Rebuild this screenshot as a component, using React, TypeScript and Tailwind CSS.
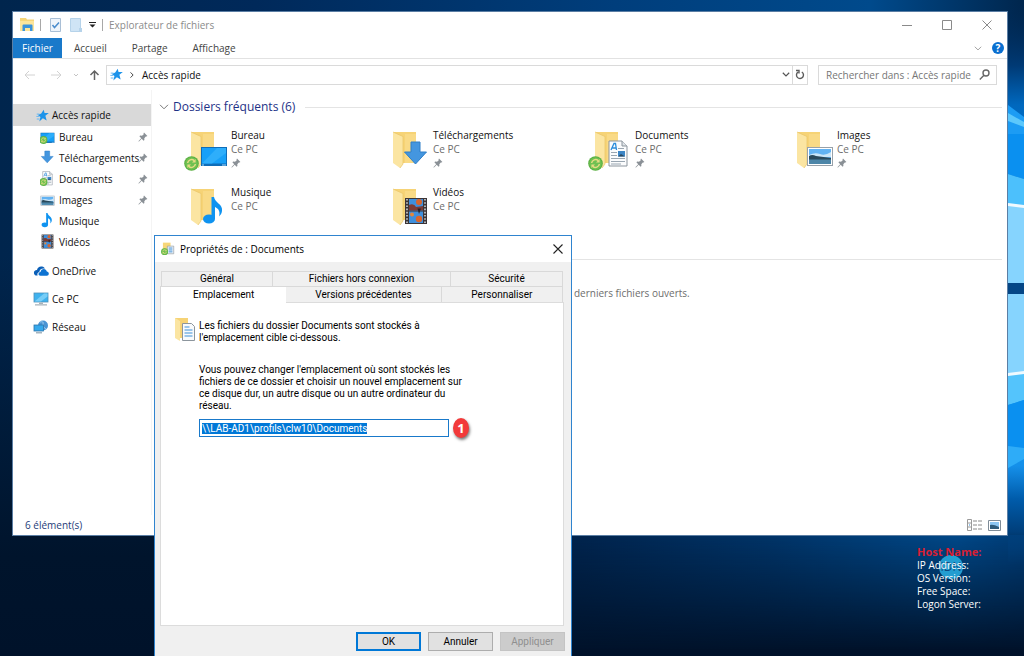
import { useEffect, useRef, useState } from "react";
import type { ReactNode } from "react";

type Kind = "desktop" | "downloads" | "documents" | "pictures" | "music" | "videos";

const folders: { name: string; kind: Kind; pinned: boolean; synced?: boolean }[] = [
  { name: "Bureau", kind: "desktop", pinned: true, synced: true },
  { name: "Téléchargements", kind: "downloads", pinned: true },
  { name: "Documents", kind: "documents", pinned: true, synced: true },
  { name: "Images", kind: "pictures", pinned: true },
  { name: "Musique", kind: "music", pinned: false },
  { name: "Vidéos", kind: "videos", pinned: false },
];

const StarIcon = ({ className = "" }: { className?: string }) => (
  <svg viewBox="0 0 14 14" className={className} aria-hidden="true">
    <path d="M8.300 .8 9.200 4.300l4.600.1-3.700 3 1.400 5-4.100-2.500L3.600 13.400l1.200-4.900L2 6.500l3.600-1.700z" fill="#1c93ea" />
    <path d="M0.800 5.500h3M0.400 8h3.200M0.800 10.800h3" stroke="#5fb4f2" strokeWidth="1" />
  </svg>
);

const PinIcon = ({ className = "" }: { className?: string }) => (
  <svg viewBox="0 0 10 10" className={className} aria-hidden="true">
    <path d="M6 .6 9.400 4l-1 .6-.6-.2-1.500 1.800.1 1.800-.8.7-1.900-1.900L1 9.400l-.5.1.1-.6 2.600-2.700L1.400 4.300l.8-.7 1.800.1 1.800-1.500-.3-.7z" fill="#8a9096" />
  </svg>
);

const SyncBadge = () => (
  <g>
    <circle cx="7.5" cy="7.5" r="7.3" fill="#5bb043" />
    <circle cx="7.5" cy="7.5" r="6.2" fill="#6fc152" />
    <path d="M3.600 7a4 4 0 0 1 6.600-2.400M11.400 8a4 4 0 0 1-6.600 2.400" fill="none" stroke="#e8dc84" strokeWidth="1.500" />
    <path d="M11.600 3v3.600H8zM3.400 12V8.400H7z" fill="#e8dc84" />
  </g>
);

// Small pictures laid over the folders, drawn in a 28x28 box
const Overlay = ({ kind }: { kind: Kind }) => {
  switch (kind) {
    case "desktop":
      return (
        <g>
          <rect x="1" y="7" width="26" height="19" fill="#0f6db8" />
          <rect x="2" y="8" width="24" height="15.500" fill="#17a0f8" />
          <path d="M2 23.500 17 8h9v5L12 23.500z" fill="#2eaefb" />
          <path d="M2 25h2M22 25h4" stroke="#a5dafd" />
        </g>
      );
    case "downloads":
      return <path d="M9 2h9v10h6.500L13.500 24 2.500 12H9z" fill="#4496df" stroke="#2f7fc8" />;
    case "documents":
      return (
        <g>
          <path d="M5 1h13l5 5v20H5z" fill="#fbfcfd" stroke="#8c959d" />
          <path d="M18 1v5h5" fill="#dfe4e8" stroke="#8c959d" />
          <path d="m7 10 3-6.500h1.500l1 6.500M8.500 8h3.500" fill="none" stroke="#2c8ddb" strokeWidth="1.300" />
          <path d="M14 8.500h6M7 12.500h6M7 15.500h6M7 18.500h14M7 21.500h14M7 24h10" stroke="#9aa6b1" strokeWidth="1.200" />
          <rect x="14" y="11" width="7" height="5.500" fill="#3c86c6" />
          <path d="m14 16.500 3-2.500 4 2.500z" fill="#2a4a63" />
        </g>
      );
    case "pictures":
      return (
        <g>
          <rect x="1.500" y="7.500" width="25" height="18" fill="#fff" stroke="#98a1a9" />
          <rect x="3" y="9" width="22" height="15" fill="#62b3f3" />
          <path d="M3 15q6-3 11-1t11-2v5H3z" fill="#cbe6f8" />
          <path d="M3 16q3-2 7 0l15 2v3H3z" fill="#2a4a5c" />
          <path d="M3 19.500h22V24H3z" fill="#4d86a8" />
        </g>
      );
    case "music":
      return (
        <g fill="#0f93f0">
          <ellipse cx="9" cy="22" rx="6" ry="4.500" />
          <path d="M11.500 0H14c1 6 9 7 8 14-.3 2.500-1.500 4-3 5.500 1.500-5-.5-8-4-9.500v12h-3.500z" />
        </g>
      );
    case "videos":
      return (
        <g>
          <rect x="3" y="1" width="22" height="26" fill="#3b3436" />
          <rect x="7" y="2" width="14" height="11.500" fill="#3f8fdc" />
          <rect x="7" y="14.500" width="14" height="11.500" fill="#3f8fdc" />
          <circle cx="17" cy="5" r="3" fill="#d8652d" />
          <path d="M7 8q5-2 7 2l7-1v4.500H7z" fill="#7d3b35" />
          <circle cx="10" cy="17.500" r="2" fill="#e3873a" />
          <circle cx="17" cy="22" r="3.200" fill="#d8652d" />
          <path d="M15.500 11.500 17 17l2-5.500z" fill="#2b2224" />
          <path d="M5 2v24M23 2v24" stroke="#cfd2d6" strokeWidth="1.600" strokeDasharray="1.600 1.600" />
        </g>
      );
  }
};

const FolderIcon = ({ kind, synced }: { kind: Kind; synced?: boolean }) => (
  <svg viewBox="0 0 44 42" className="mt-[3px] h-[42px] w-11 shrink-0" aria-hidden="true">
    <path d="M8 1h22v31H8z" fill="#f6d376" />
    <path d="M19 3h11v29H19z" fill="#f9da86" />
    <path d="M7 1l10 4.500V33l-3 4-7-5z" fill="#fbe5a2" />
    <path d="M7 1l10 4.500V33l-3 4" fill="none" stroke="#e9c466" strokeWidth=".7" />
    <g transform="translate(16 9)">
      <Overlay kind={kind} />
    </g>
    {synced && (
      <g transform="translate(0 25)">
        <SyncBadge />
      </g>
    )}
  </svg>
);

const SmallIcon = ({ kind, synced }: { kind: Kind; synced?: boolean }) => (
  <svg viewBox="0 0 28 28" className="h-[15px] w-[15px] shrink-0" aria-hidden="true">
    <Overlay kind={kind} />
    {synced && (
      <g transform="translate(-1 13)">
        <SyncBadge />
      </g>
    )}
  </svg>
);

const CloudIcon = () => (
  <svg viewBox="0 0 16 14" className="h-[14px] w-4" aria-hidden="true">
    <path d="M1 9.500C.5 7.500 2 6 4 6c.5-2.500 2.500-4 5-3.500 1.500.2 2.500 1.200 3 2C8 4 6.500 6 6.300 8 4.500 8.200 4 10 4.600 11.500 2.500 11.800 1.300 11 1 9.500z" fill="#0a5fb8" />
    <path d="M5.500 10c0-1.300 1-2 2-2 .3-2 1.700-3 3.300-3 1.500 0 2.700 1 3 2.500 1.200.1 2 1 2 2.200s-.8 2-2 2H7.500c-1.200 0-2-.7-2-1.700z" fill="#0d73d2" />
  </svg>
);

const ComputerIcon = () => (
  <svg viewBox="0 0 16 14" className="h-[14px] w-4" aria-hidden="true">
    <rect x="1" y="1" width="14" height="9" fill="#3fb2ee" stroke="#4f90b8" strokeWidth=".8" />
    <path d="M1.500 9.500 11 1.500h3.500v3L8 9.500z" fill="#77cdf7" />
    <path d="M6 10.500h4v1.500H6zM2 12.300h12v1.200H2z" fill="#a7b2ba" />
  </svg>
);

const NetworkIcon = () => (
  <svg viewBox="0 0 16 14" className="h-[14px] w-4" aria-hidden="true">
    <circle cx="10" cy="5.500" r="5" fill="#4a94d4" />
    <path d="M7 2q4-1 3 2t3 5M6 6q3 0 5 3" fill="none" stroke="#9bcdf0" />
    <rect x="1" y="5" width="9.500" height="6" fill="#36a9ec" stroke="#2c74ab" strokeWidth=".8" />
    <path d="M3 12.800h6" stroke="#8fa2b0" strokeWidth="1.200" />
  </svg>
);

const Chevron = ({ className = "" }: { className?: string }) => (
  <svg viewBox="0 0 10 6" className={className} fill="none" stroke="currentColor" aria-hidden="true">
    <path d="m1 .8 4 4 4-4" />
  </svg>
);

const Wallpaper = () => (
  <>
    <div className="absolute inset-0 bg-[linear-gradient(90deg,#00254d_0%,#00295a_25%,#003e7c_60%,#004a8c_85%,#00264d_100%)]" />
    <div className="absolute inset-x-0 bottom-0 h-[400px] bg-[linear-gradient(180deg,transparent_0%,#00142c_75%,#00122a_100%)]" />
    <div className="absolute bottom-0 right-0 h-[121px] w-[453px] bg-[linear-gradient(90deg,#00234c_0%,#003468_45%,#004888_85%,#003c76_100%)] [mask-image:linear-gradient(180deg,black_0%,transparent_95%)]" />
    <svg viewBox="0 0 16 656" preserveAspectRatio="none" className="absolute inset-y-0 right-0 h-full w-4" aria-hidden="true">
      <defs>
        <linearGradient id="sky" x1="0" y1="0" x2="0" y2="1">
          <stop offset="0" stopColor="#002550" stopOpacity="0" />
          <stop offset=".1" stopColor="#003a75" />
          <stop offset=".16" stopColor="#0068be" />
          <stop offset=".5" stopColor="#0a90f0" />
          <stop offset=".71" stopColor="#1590ea" />
          <stop offset=".76" stopColor="#005cab" />
          <stop offset=".81" stopColor="#003f7b" />
          <stop offset=".86" stopColor="#003f7b" stopOpacity="0" />
        </linearGradient>
      </defs>
      <rect width="16" height="656" fill="url(#sky)" />
      <path d="M0 105l16 12v17H0z" fill="#1c9cf4" />
      <path d="M0 113l16 9v5L0 121z" fill="#5cc8fc" />
      <path d="M0 134h16v45L0 174z" fill="#0a90f0" />
      <path d="M0 174l16 5v28H0z" fill="#4cc0fc" />
      <path d="M0 205l16 2v76H0z" fill="#86d4fe" />
      <path d="M0 203l16 2v3L0 206z" fill="#f0faff" />
      <path d="M0 283h16v11H0z" fill="#044686" />
      <path d="M0 294h16v78L0 375z" fill="#86d4fe" />
      <path d="M0 375l16-3v28L0 405z" fill="#54c4fc" />
      <path d="M0 373l16-2v3L0 376z" fill="#f0faff" />
      <path d="M0 405l16-5v48L0 446z" fill="#0a90f0" />
      <path d="M0 446l16 2v11L0 468z" fill="#2eacf8" />
    </svg>
  </>
);

const SideRow = ({ icon, label, pinned, nested }: { icon: ReactNode; label: string; pinned?: boolean; nested?: boolean }) => (
  <a
    href="#"
    className={`flex h-[21px] items-center ${nested ? "gap-1 pl-[27px]" : "gap-[3px] pl-5"} pr-[3px] text-[#111]`}
  >
    {icon}
    <span className="min-w-0 flex-1 whitespace-nowrap">{label}</span>
    {pinned && <PinIcon className="h-[10px] w-[10px] shrink-0" />}
  </a>
);

const Explorer = () => (
  <section className="absolute bottom-[120px] left-3 right-4 top-[11px] flex flex-col border border-[#5b7ea4] bg-white">
    <header className="flex h-[26px] shrink-0 items-center pl-[7px] text-[#8b8b8b]">
      <svg viewBox="0 0 16 14" className="h-[14px] w-4" aria-hidden="true">
        <path d="M0 0h6l1 1.500h7V13H0z" fill="#f7d678" />
        <path d="M0 3h14v10H0z" fill="#fde59b" />
        <path d="M2.500 13V7.500q0-1 1-1h8q1 0 1 1V13H10v-3H5v3z" fill="#3b94dc" />
      </svg>
      <span className="ml-1 h-3 w-px bg-[#a8a8a8]" />
      <button aria-label="Propriétés" className="ml-[9px]">
        <svg viewBox="0 0 11 14" className="h-[14px] w-[11px]">
          <path d="M.5.500h10v13H.5z" fill="#eef4fb" stroke="#a9bfd6" />
          <path d="m2.500 7 2 2.500 4.500-5" fill="none" stroke="#4a8ccd" strokeWidth="1.500" />
        </svg>
      </button>
      <button aria-label="Nouveau dossier" className="ml-[9px]">
        <svg viewBox="0 0 12 14" className="h-[14px] w-3">
          <path d="M.5.500h10v13H.5z" fill="#cfe4f5" stroke="#b6d3ea" />
          <path d="M9 10h3v4H9z" fill="#b6d3ea" />
        </svg>
      </button>
      <button aria-label="Personnaliser la barre" className="ml-[7px]">
        <svg viewBox="0 0 7 6" className="h-[6px] w-[7px]">
          <path d="M0 0h7v1H0zM.5 2.500h6l-3 3z" fill="#222" />
        </svg>
      </button>
      <span className="ml-[6px] h-3 w-px bg-[#a8a8a8]" />
      <h1 className="ml-[6px] flex-1">Explorateur de fichiers</h1>
      <div className="flex items-center gap-[30px] pr-[15px] text-[#8a8a8a]">
        <button aria-label="Réduire">
          <svg viewBox="0 0 10 10" className="h-[10px] w-[10px]" stroke="currentColor"><path d="M0 5.500h10" /></svg>
        </button>
        <button aria-label="Agrandir">
          <svg viewBox="0 0 10 10" className="h-[10px] w-[10px]" fill="none" stroke="currentColor"><path d="M.5.500h9v9h-9z" /></svg>
        </button>
        <button aria-label="Fermer">
          <svg viewBox="0 0 10 10" className="h-[10px] w-[10px]" stroke="currentColor"><path d="m.5.500 9 9m0-9-9 9" /></svg>
        </button>
      </div>
    </header>

    <nav className="flex h-[21px] shrink-0 items-center border-b border-[#e2e2e2] text-[#444]">
      <button className="h-full w-[49px] bg-[#1979ca] text-white">Fichier</button>
      <button className="ml-3">Accueil</button>
      <button className="ml-[25px]">Partage</button>
      <button className="ml-[25px]">Affichage</button>
      <button aria-label="Développer le ruban" className="ml-auto text-[#8a8a8a]">
        <Chevron className="h-[5px] w-2" />
      </button>
      <button aria-label="Aide" className="ml-[10px] mr-[3px] flex h-3 w-3 items-center justify-center rounded-full bg-[#0a6fd0] text-[10px] font-bold leading-none text-white">
        ?
      </button>
    </nav>

    <div className="flex h-[31px] shrink-0 items-center pl-[10px] pr-[10px]">
      <svg viewBox="0 0 80 12" className="h-3 w-20" fill="none" aria-hidden="true">
        <path d="M12 6H2m4-4L2 6l4 4M28 6h10m-4-4 4 4-4 4" stroke="#d2d2d2" />
        <path d="m51 5 2 2 2-2" stroke="#c4c4c4" />
        <path d="M71.500 11V2m-4 4 4-4 4 4" stroke="#636363" strokeWidth="1.500" />
      </svg>
      <div className="ml-[3px] flex h-5 min-w-0 flex-1 items-center border border-[#dadada]">
        <StarIcon className="ml-[3px] h-[13px] w-[13px]" />
        <svg viewBox="0 0 5 8" className="ml-[7px] h-[6px] w-1" fill="none" stroke="#444" strokeWidth="1.300" aria-hidden="true"><path d="m.5.500 3.500 3.500L.5 7.500" /></svg>
        <span className="ml-2 flex-1 text-[#111]">Accès rapide</span>
        <button aria-label="Emplacements précédents" className="mr-[2px] text-[#555]">
          <Chevron className="h-[5px] w-2 stroke-[1.500]" />
        </button>
        <button aria-label="Actualiser" className="flex h-full w-[15px] items-center justify-center border-l border-[#dadada]">
          <svg viewBox="0 0 10 11" className="h-[11px] w-[10px]" fill="none" stroke="#5b5b5b" strokeWidth="1.400">
            <path d="M6.800 3a3.500 3.500 0 1 1-3.800.1M1 1.500h3v3" />
          </svg>
        </button>
      </div>
      <label className="ml-[10px] flex h-5 w-[179px] items-center border border-[#dadada] pl-[7px] pr-[6px]">
        <input
          aria-label="Rechercher dans : Accès rapide"
          placeholder="Rechercher dans : Accès rapide"
          className="min-w-0 flex-1 outline-none placeholder:text-[#767676]"
        />
        <svg viewBox="0 0 11 11" className="h-[11px] w-[11px] shrink-0" fill="none" stroke="#666" strokeWidth="1.400" aria-hidden="true">
          <circle cx="7" cy="4" r="3" />
          <path d="M5 6.200.8 10.400" />
        </svg>
      </label>
    </div>

    <div className="flex min-h-0 flex-1">
      <aside className="w-[139px] shrink-0 border-r border-[#f4f4f4] pt-[14px]">
        <a href="#" className="flex h-[22px] items-center gap-[3px] bg-[#d9d9d9] pl-[23px] text-[#111]">
          <StarIcon className="h-[13px] w-[13px]" />
          Accès rapide
        </a>
        {folders.map((f) => (
          <SideRow key={f.name} nested pinned={f.pinned} label={f.name} icon={<SmallIcon kind={f.kind} synced={f.synced} />} />
        ))}
        <div className="mt-2 space-y-[7px]">
          <SideRow icon={<CloudIcon />} label="OneDrive" />
          <SideRow icon={<ComputerIcon />} label="Ce PC" />
          <SideRow icon={<NetworkIcon />} label="Réseau" />
        </div>
      </aside>

      <main className="min-w-0 flex-1 pr-[5px] pt-[7px]">
        <h2 className="flex h-5 items-center pl-[7px] text-[12px] text-[#1e3287]">
          <Chevron className="mr-1 h-[6px] w-[10px] text-[#777]" />
          Dossiers fréquents (6)
          <span className="ml-[10px] h-px flex-1 bg-[#e4e4e4]" />
        </h2>
        <div className="grid grid-cols-4 gap-y-[2px] pl-8 pr-[10px] pt-[11px]">
          {folders.map((f) => (
            <a href="#" key={f.name} className="flex h-[55px] gap-[3px]">
              <FolderIcon kind={f.kind} synced={f.synced} />
              <span className="flex flex-col leading-[14px]">
                <span className="text-[#111]">{f.name}</span>
                <span className="text-[#6d6d6d]">Ce PC</span>
                {f.pinned && <PinIcon className="mt-[2px] h-[10px] w-[10px]" />}
              </span>
            </a>
          ))}
        </div>
        <hr className="ml-[120px] mt-[19px] border-[#e4e4e4]" />
        <p className="mt-[26px] pl-[422px] text-[#6d6d6d]">derniers fichiers ouverts.</p>
      </main>
    </div>

    <footer className="flex h-5 shrink-0 items-center pl-3 pr-[6px] text-[#1e3c78]">
      <span className="flex-1">6 élément(s)</span>
      <button aria-label="Détails">
        <svg viewBox="0 0 15 12" className="h-3 w-[15px]" fill="none">
          <path d="M.5.500h4v11h-4zM.5 4h4M.5 8h4" stroke="#9a9a9a" />
          <path d="M6 2h4m1 0h4M6 6h4m1 0h4M6 10h4m1 0h4" stroke="#8a8a8a" />
          <path d="M2 6h1" stroke="#2f8fe0" />
        </svg>
      </button>
      <button aria-label="Grandes icônes" className="ml-[6px]">
        <svg viewBox="0 0 13 11" className="h-[11px] w-[13px]">
          <path d="M.5.500h12v10H.5z" fill="#fff" stroke="#7f8c98" />
          <path d="M2 2h9v7H2z" fill="#8cc6f2" />
          <path d="M2 5q3-1 9 2v2H2z" fill="#2f5c7c" />
        </svg>
      </button>
    </footer>
  </section>
);

const firstTabs = ["Général", "Fichiers hors connexion", "Sécurité"];
const secondTabs = ["Emplacement", "Versions précédentes", "Personnaliser"];

const PropertiesDialog = () => {
  const [target, setTarget] = useState("\\\\LAB-AD1\\profils\\clw10\\Documents");
  const inputRef = useRef<HTMLInputElement>(null);

  useEffect(() => {
    inputRef.current?.focus();
    inputRef.current?.select();
  }, []);

  return (
    <section
      role="dialog"
      aria-labelledby="dialog-title"
      className="absolute left-[154px] top-[235px] w-[418px] border border-[#2f84cf] bg-[#f0f0f0] font-['Roboto','Liberation_Sans',sans-serif] text-[10px] leading-3 text-black"
    >
      <header className="flex h-[26px] items-center bg-white pl-[6px] pr-2 font-['Open_Sans',sans-serif] text-[10px]">
        <svg viewBox="0 0 44 42" className="h-[14px] w-[14px]" aria-hidden="true">
          <path d="M6 1h24v33H6z" fill="#f7d678" />
          <path d="M20 12h20v24H20z" fill="#f2f6fa" stroke="#8c959d" strokeWidth="2" />
          <path d="M24 18h12M24 24h12M24 30h12" stroke="#3d8fd8" strokeWidth="3" />
          <g transform="translate(0 18) scale(1.500)">
            <SyncBadge />
          </g>
        </svg>
        <h2 id="dialog-title" className="ml-[5px] flex-1">Propriétés de : Documents</h2>
        <button aria-label="Fermer">
          <svg viewBox="0 0 10 10" className="h-[10px] w-[10px]" stroke="#222" strokeWidth="1.100"><path d="m.5.500 9 9m0-9-9 9" /></svg>
        </button>
      </header>

      <div className="pl-[5px] pr-[6px] pt-[9px]">
        <div role="tablist" className="pr-[2px]">
          <div className="ml-px grid h-[15px] grid-cols-[111fr_178fr_112fr] border-l border-t border-[#d9d9d9]">
            {firstTabs.map((t) => (
              <button key={t} role="tab" className="border-r border-[#d9d9d9]">{t}</button>
            ))}
          </div>
          <div className="grid h-4 grid-cols-[126fr_155fr_121fr]">
            {secondTabs.map((t, i) =>
              i === 0 ? (
                <button key={t} role="tab" aria-selected className="relative z-10 -mb-px border-l border-t border-[#d9d9d9] bg-white">{t}</button>
              ) : (
                <button key={t} role="tab" className="border-r border-t border-[#d9d9d9]">{t}</button>
              )
            )}
          </div>
        </div>

        <div role="tabpanel" className="mr-px h-[324px] border border-[#dcdcdc] bg-white pl-[13px] pt-[14px]">
          <div className="flex gap-[3px]">
            <svg viewBox="0 0 22 25" className="h-[25px] w-[22px]" aria-hidden="true">
              <path d="M1 1h13v20H1z" fill="#f6d376" />
              <path d="m1 1 5 3v20l-5-3z" fill="#fbe5a2" />
              <path d="M8.500 6.500h9l3 3v14h-12z" fill="#f8fafc" stroke="#8c959d" />
              <path d="M10.500 10h5M10.500 13h8M10.500 16h8M10.500 19h8" stroke="#3d8fd8" strokeWidth="1.200" />
            </svg>
            <p className="pt-[3px]">
              Les fichiers du dossier Documents sont stockés à
              <br />
              l'emplacement cible ci-dessous.
            </p>
          </div>
          <label htmlFor="target" className="ml-[25px] mt-[20px] block">
            Vous pouvez changer l'emplacement où sont stockés les
            <br />
            fichiers de ce dossier et choisir un nouvel emplacement sur
            <br />
            ce disque dur, un autre disque ou un autre ordinateur du
            <br />
            réseau.
          </label>
          <div className="ml-[25px] mt-[6px] flex items-center gap-1">
            <input
              id="target"
              ref={inputRef}
              value={target}
              onChange={(e) => setTarget(e.target.value)}
              className="h-[18px] w-[250px] border border-[#1979ca] px-[2px] outline-none selection:bg-[#0078d7] selection:text-white"
            />
            <span className="flex h-5 w-4 items-center justify-center rounded-[50%] bg-[#f23a3a] font-['Open_Sans',sans-serif] text-[13px] font-bold text-white shadow-[1px_2px_3px_#0008]">
              1
            </span>
          </div>
        </div>

        <div className="flex justify-end gap-[7px] pb-4 pt-[6px]">
          <button className="h-[19px] w-[65px] border-2 border-[#0078d7] bg-[#e1e1e1]">OK</button>
          <button className="h-[19px] w-[65px] border border-[#adadad] bg-[#e1e1e1]">Annuler</button>
          <button disabled className="h-[19px] w-[65px] border border-[#c4c4c4] bg-[#cccccc] text-[#8f8f8f]">Appliquer</button>
        </div>
      </div>
    </section>
  );
};

const HostInfo = () => (
  <div className="absolute bottom-[45px] right-[38px] w-[69px] whitespace-nowrap text-white">
    <span className="absolute left-[22px] top-[10px] flex h-6 w-6 items-center justify-center rounded-full bg-[#27a9dc]/90 text-[12px] text-[#0c4a80]">
      IDN
    </span>
    <div className="relative">
      <p className="text-[11px] font-bold leading-[14px] text-[#d81f33]">Host Name:</p>
      <p className="leading-[13px]">IP Address:</p>
      <p className="leading-[13px]">OS Version:</p>
      <p className="leading-[13px]">Free Space:</p>
      <p className="leading-[13px]">Logon Server:</p>
    </div>
  </div>
);

const App = () => (
  <div className="relative h-screen overflow-hidden bg-[#00142c] font-['Open_Sans',sans-serif] text-[10px] leading-[14px]">
    <Wallpaper />
    <HostInfo />
    <Explorer />
    <PropertiesDialog />
  </div>
);

export default App;
